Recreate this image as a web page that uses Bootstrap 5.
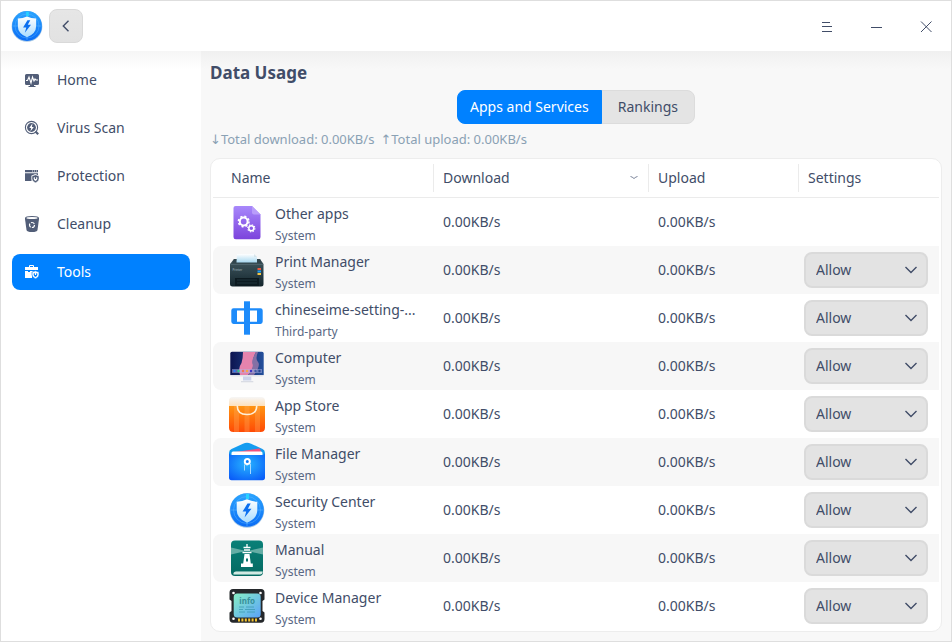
<!DOCTYPE html>
<html lang="en">
<head>
<meta charset="utf-8">
<meta name="viewport" content="width=device-width, initial-scale=1">
<title>Security Center - Data Usage</title>
<link href="https://cdn.jsdelivr.net/npm/bootstrap@5.3.0/dist/css/bootstrap.min.css" rel="stylesheet">
<style>
  :root { --ink: #414d68; --accent: #0081ff; --line: #ebebeb; }
  body { font-family: "Noto Sans", "DejaVu Sans", sans-serif; font-size: 14px; line-height: 20px; color: var(--ink); background: #fff; }
  .app-window { border: 1px solid #dedede; }
  .title-bar { height: 50px; padding-left: 10px; }
  .brand-icon { width: 32px; height: 32px; }
  .back-btn { width: 34px; height: 34px; margin-left: 6px; border: 1px solid #d9d9d9; border-radius: 8px; background: linear-gradient(#e6e6e6, #e2e2e2); color: var(--ink); }
  .win-btn { width: 50px; height: 50px; border: 0; background: none; color: var(--ink); }
  .side-bar { width: 200px; padding: 11px; background: linear-gradient(#f6f6f6, #fff 18px); }
  .side-nav { gap: 12px; }
  .side-link { height: 36px; padding: 0 12px; gap: 17px; border-radius: 8px; color: var(--ink); }
  .side-link:hover { color: var(--ink); background: #f2f2f2; }
  .side-link.active, .side-link.active:hover { color: #fff; background: var(--accent); }
  .content-pane { padding: 9px; background: linear-gradient(#f0f0f0, #f8f8f8 18px); min-width: 0; }
  .page-title { font-size: 17px; line-height: 26px; font-weight: 700; margin: 0 0 4px; }
  .tab-btn { height: 34px; padding: 0 12px; font-size: 14px; line-height: 20px; border: 1px solid #dcdcdc; border-radius: 8px; background: #e4e4e4; color: var(--ink); }
  .tab-btn.wide-pad { padding: 0 16px; }
  .tab-btn.active, .tab-btn.active:hover { background: var(--accent); border-color: var(--accent); color: #fff; }
  .totals { font-size: 13px; margin: 5px 0 9px; color: #8aa1b4; gap: 6px; }
  .usage-card { border: 1px solid #ededed; border-radius: 10px; background: #fff; padding: 0 2px; }
  .usage-table { table-layout: fixed; border-collapse: separate; border-spacing: 0; color: var(--ink); }
  .usage-table th { padding: 5px 0; font-weight: 400; border-bottom: 1px solid var(--line); }
  .head-cell { height: 28px; padding: 0 9px; border-right: 1px solid var(--line); }
  th:first-child .head-cell { padding-left: 18px; }
  th:last-child .head-cell { border-right: 0; }
  .usage-table td { height: 48px; padding: 0 9px; vertical-align: middle; }
  .usage-table td:first-child { padding: 0 9px 0 16px; }
  .usage-table td:last-child { padding: 0 11px 0 5px; }
  .usage-table tbody tr:nth-child(even) td { background: #f7f7f7; }
  .usage-table tbody tr:nth-child(even) td:first-child { border-radius: 8px 0 0 8px; }
  .app-icon { width: 36px; height: 36px; overflow: visible; }
  .app-label { padding-top: 3px; margin-left: 10px; }
  .app-kind { font-size: 12px; line-height: 16px; margin-top: 4px; color: #596784; }
  .rule-select { height: 36px; padding: 0 30px 0 10px; font-size: 14px; line-height: 20px; color: var(--ink); border: 2px solid #dadada; border-radius: 8px;
    background-color: #e3e3e3; background-position: right 8px center; background-size: 14px 14px;
    background-image: url("data:image/svg+xml,%3csvg xmlns='http://www.w3.org/2000/svg' viewBox='0 0 14 14'%3e%3cpath fill='none' stroke='%23414d68' stroke-width='1.4' d='M1.5 4l5.5 5.5L12.5 4'/%3e%3c/svg%3e"); }
  .col-rate-down { width: 215px; } .col-rate-up { width: 150px; } .col-rule { width: 140px; }
</style>
</head>
<body>
<svg width="0" height="0" class="position-absolute" aria-hidden="true">
  <defs>
    <linearGradient id="gBlue" x2="0" y2="1"><stop stop-color="#2ba5ff"/><stop offset="1" stop-color="#0a6cf5"/></linearGradient>
    <linearGradient id="gShield" x2="0" y2="1"><stop stop-color="#fff"/><stop offset="1" stop-color="#a9dcff"/></linearGradient>
    <linearGradient id="gPurple" x2="0" y2="1"><stop stop-color="#a888fb"/><stop offset="1" stop-color="#7c43dc"/></linearGradient>
    <linearGradient id="gPrint" x2="0" y2="1"><stop stop-color="#42585f"/><stop offset=".5" stop-color="#2b4048"/><stop offset="1" stop-color="#14252c"/></linearGradient>
    <linearGradient id="gPaper" x2="0" y2="1"><stop stop-color="#fff"/><stop offset="1" stop-color="#a8d8f0"/></linearGradient>
    <linearGradient id="gScreen"><stop stop-color="#0d1450"/><stop offset="1" stop-color="#24509c"/></linearGradient>
    <linearGradient id="gOrange" x2="0" y2="1"><stop stop-color="#ff9412"/><stop offset="1" stop-color="#ff4a05"/></linearGradient>
    <linearGradient id="gCream" x2="0" y2="1"><stop stop-color="#f6f6f6"/><stop offset="1" stop-color="#ffdfb5"/></linearGradient>
    <radialGradient id="gFile" cy=".4" r=".7"><stop stop-color="#27b4ff"/><stop offset="1" stop-color="#0a5df8"/></radialGradient>
    <linearGradient id="gTeal" x2="0" y2="1"><stop stop-color="#0a8078"/><stop offset="1" stop-color="#046a62"/></linearGradient>
    <linearGradient id="gInfo" x2="1" y2="1"><stop stop-color="#87efc4"/><stop offset="1" stop-color="#5aa2fa"/></linearGradient>
    <symbol id="shield-app" viewBox="0 0 36 36">
      <circle cx="18" cy="18.5" r="17.3" fill="#a3c6e6"/>
      <circle cx="18" cy="18" r="16.8" fill="url(#gBlue)"/>
      <circle cx="18" cy="18" r="13.5" fill="none" stroke="#67bcff" stroke-width=".7" opacity=".6"/>
      <path d="M17 2h3v5h-3z" fill="#27d1ff"/><path d="M1.500 18h6M28.500 18h6M18 29v5" stroke="#5ab6ff" stroke-width=".6"/>
      <path d="M18 7.300Q22.500 9.500 28.300 9.700V18Q28.300 26.500 18 30.700Q7.700 26.500 7.700 18V9.700Q13.500 9.500 18 7.300Z" fill="url(#gShield)"/>
      <path d="M18.500 11.500 13.600 19.600H17.200L15.600 25.600 22.500 16.700H18.900L21.700 11.500Z" fill="#0a6ff0"/>
    </symbol>
  </defs>
</svg>

<div class="app-window d-flex flex-column min-vh-100">
  <header class="title-bar d-flex align-items-center">
    <svg class="brand-icon" role="img" aria-label="Security Center"><use href="#shield-app"/></svg>
    <button type="button" class="back-btn d-flex align-items-center justify-content-center p-0" aria-label="Back">
      <svg width="14" height="14" viewBox="0 0 14 14" fill="none" stroke="currentColor" stroke-width="1.4"><path d="M9.500 1.800 4.300 7 9.500 12.200"/></svg>
    </button>
    <div class="d-flex ms-auto">
      <button type="button" class="win-btn p-0" aria-label="Menu"><svg width="12" height="12" viewBox="0 0 12 12" fill="none" stroke="currentColor" shape-rendering="crispEdges"><path d="M2 1.500h8M2 5.500h10M2 10.500h10"/></svg></button>
      <button type="button" class="win-btn p-0" aria-label="Minimize"><svg width="12" height="12" viewBox="0 0 12 12" fill="none" stroke="currentColor" shape-rendering="crispEdges"><path d="M1 6.500h11"/></svg></button>
      <button type="button" class="win-btn p-0" aria-label="Close"><svg width="12" height="12" viewBox="0 0 12 12" fill="none" stroke="currentColor"><path d="M1 .5l10.500 10.500M11.500.5 1 11"/></svg></button>
    </div>
  </header>

  <div class="d-flex flex-grow-1">
    <aside class="side-bar flex-shrink-0">
      <nav class="side-nav nav flex-column" aria-label="Main">
        <a href="#" class="side-link d-flex align-items-center text-decoration-none">
          <svg width="16" height="16" viewBox="0 0 16 16"><path fill="#525e78" d="M2.500 2h11Q15 2 15 3.500v8Q15 13 13.500 13H10v1h1.500v1h-7v-1H6v-1H2.500Q1 13 1 11.500v-8Q1 2 2.500 2Z"/><path d="M2 8.500h1.500L5 5l2 6 1.500-6L10 9l1-2 1 1h2" fill="none" stroke="#fff" stroke-width="1.100"/></svg>
          <span>Home</span></a>
        <a href="#" class="side-link d-flex align-items-center text-decoration-none">
          <svg width="16" height="16" viewBox="0 0 16 16"><circle cx="7.500" cy="7.500" r="6.100" fill="none" stroke="#525e78" stroke-width="1.100"/><circle cx="7.500" cy="7.500" r="4.400" fill="#525e78"/><path d="M8.500 3.300 5.300 8h1.900l-.8 3.600L9.800 7H7.900Z" fill="#fff"/><path d="m11.500 11.500 2.700 2.700" stroke="#525e78" stroke-width="2.200"/></svg>
          <span>Virus Scan</span></a>
        <a href="#" class="side-link d-flex align-items-center text-decoration-none">
          <svg width="16" height="16" viewBox="0 0 16 16"><path fill="#525e78" d="M1 2h13v2.200H1ZM1 5.200h13v2L11.500 6 7.500 7.500V13H1Z"/><path d="M8 3h1M10 3h1M12 3h1" stroke="#fff" stroke-width=".9"/><path d="M11.500 6.800 15 8v2.800q0 2.700-3.500 4-3.500-1.300-3.500-4V8Z" fill="#525e78" stroke="#fff" stroke-width=".5"/><path d="M11.500 9 13.300 9.600v1.200q0 1.300-1.800 2.200-1.800-.9-1.800-2.200V9.600Z" fill="#fff"/><path d="M11.500 8.700v2.300" stroke="#525e78" stroke-width="1.200"/></svg>
          <span>Protection</span></a>
        <a href="#" class="side-link d-flex align-items-center text-decoration-none">
          <svg width="16" height="16" viewBox="0 0 16 16"><path d="M1 2Q1 0 8 0t7 2v1l-1.500 11Q13 16 8 16t-5.500-2L1 3Z" fill="#525e78"/><path d="M2.300 2q.4-.9 5.700-.9t5.700.9q-.4 1-5.700 1t-5.700-1Z" fill="#fff"/><circle cx="8" cy="9" r="2.500" fill="none" stroke="#fff" stroke-width="1.200" stroke-dasharray="4 1.200"/></svg>
          <span>Cleanup</span></a>
        <a href="#" class="side-link active d-flex align-items-center text-decoration-none" aria-current="page">
          <svg width="16" height="16" viewBox="0 0 16 16"><path d="M5.500 3V1.500h4V3" fill="none" stroke="#fff"/><path fill="#fff" d="M1 3h13v3H1ZM1 7h3v1h2V7h5.500L8 8.500V14H1Z"/><path d="M11.500 6.800 15 8v2.800q0 2.700-3.500 4-3.500-1.300-3.500-4V8Z" fill="#fff" stroke="#0081ff" stroke-width=".6"/><path d="M11.500 9 13.300 9.600v1.200q0 1.300-1.800 2.200-1.800-.9-1.800-2.200V9.600Z" fill="#0081ff"/><path d="M11.500 8.700v2.300" stroke="#fff" stroke-width="1.200"/></svg>
          <span>Tools</span></a>
      </nav>
    </aside>

    <main class="content-pane flex-grow-1 d-flex flex-column">
      <h1 class="page-title">Data Usage</h1>
      <div class="btn-group align-self-center" role="group" aria-label="View">
        <button type="button" class="btn tab-btn active" aria-pressed="true">Apps and Services</button>
        <button type="button" class="btn tab-btn wide-pad" aria-pressed="false">Rankings</button>
      </div>
      <div class="totals d-flex"><span>↓Total download: 0.00KB/s</span><span>↑Total upload: 0.00KB/s</span></div>

      <div class="usage-card flex-grow-1">
        <table class="usage-table w-100">
          <colgroup><col><col class="col-rate-down"><col class="col-rate-up"><col class="col-rule"></colgroup>
          <thead>
            <tr>
              <th scope="col"><div class="head-cell d-flex align-items-center">Name</div></th>
              <th scope="col"><div class="head-cell d-flex align-items-center justify-content-between">Download
                <svg width="10" height="6" viewBox="0 0 10 6" fill="none" stroke="#7c859b"><path d="M1.500 1.500Q3 1.700 5 3.500 7 1.700 8.500 1.500"/></svg></div></th>
              <th scope="col"><div class="head-cell d-flex align-items-center">Upload</div></th>
              <th scope="col"><div class="head-cell d-flex align-items-center">Settings</div></th>
            </tr>
          </thead>
          <tbody>
            <tr>
              <td><div class="d-flex align-items-center">
                <svg class="app-icon flex-shrink-0" viewBox="0 0 36 36"><path d="M6.500 2H23l8.500 8.500V33q0 2.300-2.300 2.300H6.800q-2.300 0-2.300-2.300V4q0-2 2-2Z" fill="url(#gPurple)"/><path d="M23 2l8.500 8.500H25q-2 0-2-2Z" fill="#b99dfa"/><g fill="none" stroke="#fff"><circle cx="14.700" cy="17.500" r="3.900" stroke-width="2"/><circle cx="14.700" cy="17.500" r="5.300" stroke-width="1.500" stroke-dasharray="2.080 2.080"/><circle cx="22.300" cy="24.300" r="2.500" stroke-width="1.500"/><circle cx="22.300" cy="24.300" r="3.600" stroke-width="1.100" stroke-dasharray="1.410 1.410"/></g></svg>
                <div class="app-label"><div>Other apps</div><div class="app-kind">System</div></div></div></td>
              <td>0.00KB/s</td><td>0.00KB/s</td><td></td>
            </tr>
            <tr>
              <td><div class="d-flex align-items-center">
                <svg class="app-icon flex-shrink-0" viewBox="0 0 36 36"><path d="M5 7h26l3.500 5v20q0 2.500-2.500 2.500H3.500Q1 34.500 1 32V12Z" fill="url(#gPrint)"/><path d="M5 7h26l2 4.500H3Z" fill="#32464e"/><path d="M8 2h17l3 3v5.500H7.500Z" fill="url(#gPaper)"/><path d="M25 2v3h3Z" fill="#d6e4ea"/><path d="M1.300 12.500h33" stroke="#607780" stroke-width=".5"/><path d="M6 26h24v8H6Z" fill="#0c1a20"/><path d="M8 28h20M8 31h20" stroke="#294049" stroke-width=".7"/><path d="M28.500 16h3.500v2h-3.500Z" fill="#e85a42"/><path d="M28.500 18.500h3.500v2h-3.500Z" fill="#1e9df5"/><path d="M28.500 21h3.500v2h-3.500Z" fill="#f5c542"/><text x="3.500" y="18.500" font-size="3" fill="#aebdc2">Printer</text></svg>
                <div class="app-label"><div>Print Manager</div><div class="app-kind">System</div></div></div></td>
              <td>0.00KB/s</td><td>0.00KB/s</td>
              <td><select class="form-select rule-select" aria-label="Print Manager network access"><option>Allow</option></select></td>
            </tr>
            <tr>
              <td><div class="d-flex align-items-center">
                <svg class="app-icon flex-shrink-0" viewBox="0 0 36 36" fill="#1d8bfa"><path d="M15 1.300h6v33.400h-6Z"/><path fill-rule="evenodd" d="M4.500 8.200h27q2.200 0 2.200 2.200v11.200q0 2.400-2.200 2.400h-27q-2.200 0-2.200-2.400V10.400q0-2.200 2.200-2.200ZM8 10.400v11.400h20V10.400Z"/></svg>
                <div class="app-label"><div>chineseime-setting-...</div><div class="app-kind">Third-party</div></div></div></td>
              <td>0.00KB/s</td><td>0.00KB/s</td>
              <td><select class="form-select rule-select" aria-label="chineseime-setting network access"><option>Allow</option></select></td>
            </tr>
            <tr>
              <td><div class="d-flex align-items-center">
                <svg class="app-icon flex-shrink-0" viewBox="0 0 36 36"><path d="M1 24h34v2.500q0 2-2 2H3q-2 0-2-2Z" fill="#e2e4ea"/><path d="M3 3.800h30q1.700 0 1.700 1.700V27H1.300V5.500Q1.300 3.800 3 3.800Z" fill="url(#gScreen)"/><path d="M14 4h13q-4 7-3 12t-5 11h-8Q9 20 12.500 15 14 10 14 4Z" fill="#e583ad"/><path d="M29 4q-3 7 0 10t-4 13h-6q6-8 4.500-11T27 4Z" fill="#8470a5"/><path d="M3 21h30v4H3Z" fill="#b3b6e8" opacity=".5"/><g><circle cx="5.500" cy="23" r="1.200" fill="#2d7cf5"/><circle cx="9.500" cy="23" r="1.200" fill="#2ec98b"/><circle cx="14" cy="23" r="1.200" fill="#f5774e"/><circle cx="18" cy="23" r="1.200" fill="#f5a742"/><circle cx="22" cy="23" r="1.200" fill="#3c35c6"/><circle cx="26.500" cy="23" r="1.200" fill="#3c5ca5"/><circle cx="30.500" cy="23" r="1.200" fill="#29458f"/></g><path d="M14 28.500h8.300V32.500H14Z" fill="#cbd2ea"/><path d="M12 33h12.300v1.300H12Z" fill="#d9dce4"/></svg>
                <div class="app-label"><div>Computer</div><div class="app-kind">System</div></div></div></td>
              <td>0.00KB/s</td><td>0.00KB/s</td>
              <td><select class="form-select rule-select" aria-label="Computer network access"><option>Allow</option></select></td>
            </tr>
            <tr>
              <td><div class="d-flex align-items-center">
                <svg class="app-icon flex-shrink-0" viewBox="0 0 36 36"><path d="M4 1h28q4 0 4 4v6H0V5q0-4 4-4Z" fill="url(#gCream)"/><path d="M0 10h36v21.500q0 4.500-4.500 4.500h-27Q0 36 0 31.500Z" fill="url(#gOrange)"/><path d="M5 10h5v26H5ZM15.500 10h5v26h-5ZM26 10h5v26h-5Z" fill="#ffb066" opacity=".3"/><path d="M8.200 9.500q0 9 9.800 9t9.800-9" fill="none" stroke="#fff0d8" stroke-width="1.500"/></svg>
                <div class="app-label"><div>App Store</div><div class="app-kind">System</div></div></div></td>
              <td>0.00KB/s</td><td>0.00KB/s</td>
              <td><select class="form-select rule-select" aria-label="App Store network access"><option>Allow</option></select></td>
            </tr>
            <tr>
              <td><div class="d-flex align-items-center">
                <svg class="app-icon flex-shrink-0" viewBox="0 0 36 36"><path d="M14-.3q4-1.800 8 0L33.500 5Q36 6.200 36 9v20H0V9q0-2.800 2.500-4Z" fill="#149cf0"/><path d="M3 8.500 30 4.500q1.700 0 2 4.500v3H3Z" fill="#f0517d"/><path d="M4 7.500h28q1.500 0 1.500 1.500v3h-31V9Q2.500 7.500 4 7.500Z" fill="#fff"/><path d="M0 9.500Q1 11 3 11h30q2 0 3-1.500v24q0 2.800-2.500 2.800h-31Q0 36.300 0 33.500Z" fill="url(#gFile)"/><path d="M18 19v3M15.500 20.500v6M21.500 20v10" stroke="#a7d8ff" stroke-width="1"/><circle cx="18.300" cy="17.500" r="2.500" fill="#0c7ef8" stroke="#fff" stroke-width="2"/></svg>
                <div class="app-label"><div>File Manager</div><div class="app-kind">System</div></div></div></td>
              <td>0.00KB/s</td><td>0.00KB/s</td>
              <td><select class="form-select rule-select" aria-label="File Manager network access"><option>Allow</option></select></td>
            </tr>
            <tr>
              <td><div class="d-flex align-items-center">
                <svg class="app-icon flex-shrink-0"><use href="#shield-app"/></svg>
                <div class="app-label"><div>Security Center</div><div class="app-kind">System</div></div></div></td>
              <td>0.00KB/s</td><td>0.00KB/s</td>
              <td><select class="form-select rule-select" aria-label="Security Center network access"><option>Allow</option></select></td>
            </tr>
            <tr>
              <td><div class="d-flex align-items-center">
                <svg class="app-icon flex-shrink-0" viewBox="0 0 36 36"><rect x="2" y=".5" width="32" height="35.500" rx="4" fill="url(#gTeal)"/><path d="M2 7.500 15 10.500v1L2 14.500ZM34 7.500 21 10.500v1l13 3Z" fill="#64ada5"/><path d="M33.700 31.500H7q-2 0-2.500 1.500v1.500H31q2.500 0 2.700-3Z" fill="#e4f4ee"/><path d="M5 33h28" stroke="#9cc9bf" stroke-width=".5"/><path d="M18 4v3M13.500 12.500h9M14.500 7.500h7M15 10h6" stroke="#fff" stroke-width="1.300"/><path fill-rule="evenodd" d="M15.500 14h5l1.300 9.500h2V27H12v-3.500h2.200ZM17 18.500v3h2v-3Z" fill="#fff"/></svg>
                <div class="app-label"><div>Manual</div><div class="app-kind">System</div></div></div></td>
              <td>0.00KB/s</td><td>0.00KB/s</td>
              <td><select class="form-select rule-select" aria-label="Manual network access"><option>Allow</option></select></td>
            </tr>
            <tr>
              <td><div class="d-flex align-items-center">
                <svg class="app-icon flex-shrink-0" viewBox="0 0 36 36"><path d="M4 1h28q3.500 0 3.500 3.500v7L33.500 13v10l2 1.500V31q0 3.700-3.500 3.700H4Q.5 34.700.5 31v-6.500l2-1.500V13l-2-1.500v-7Q.5 1 4 1Z" fill="#25282b"/><g fill="#fff"><circle cx="4.500" cy="5" r="1.300"/><circle cx="31.500" cy="5" r="1.300"/><circle cx="4.500" cy="30.800" r="1.300"/><circle cx="31.500" cy="30.800" r="1.300"/></g><rect x="4.700" y="5.500" width="27" height="24" rx="3.500" fill="url(#gInfo)"/><text x="18.200" y="15.500" text-anchor="middle" font-size="8" font-weight="700" fill="#378f99">info</text><path d="M10 19h5M17 19h8M10 21.500h4M16 21.500h10M10 24h6M18 24h8" stroke="#3c9bb2" stroke-width=".8"/><path d="M9 32h19" stroke="#f4c430" stroke-width="3" stroke-dasharray="2 1.400"/></svg>
                <div class="app-label"><div>Device Manager</div><div class="app-kind">System</div></div></div></td>
              <td>0.00KB/s</td><td>0.00KB/s</td>
              <td><select class="form-select rule-select" aria-label="Device Manager network access"><option>Allow</option></select></td>
            </tr>
          </tbody>
        </table>
      </div>
    </main>
  </div>
</div>
<script src="https://cdn.jsdelivr.net/npm/bootstrap@5.3.0/dist/js/bootstrap.bundle.min.js"></script>
</body>
</html>
